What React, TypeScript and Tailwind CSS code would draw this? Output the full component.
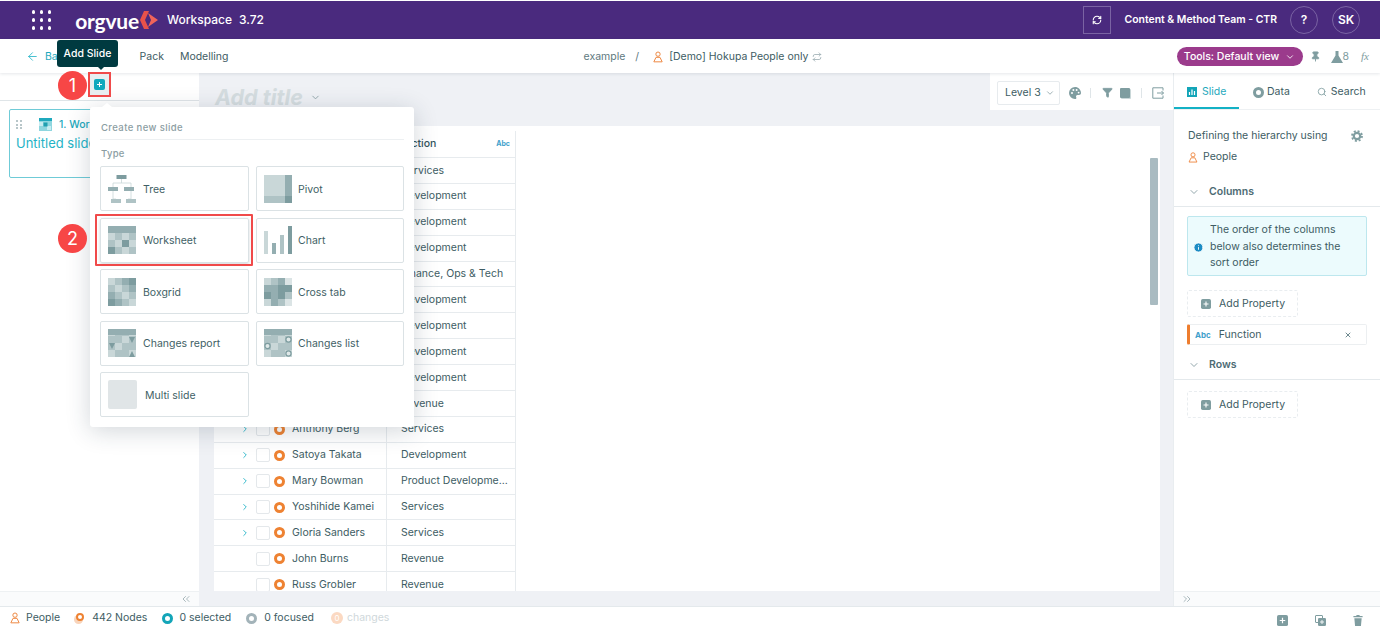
import React from "react";
import { ArrowLeft, ChevronDown, ChevronRight, ChevronsLeft, ChevronsRight, Filter, Info, Pin, RefreshCw, Repeat, Search, X } from "lucide-react";

const Person = ({ className = "" }: { className?: string }) => (
  <svg viewBox="0 0 12 14" className={className} fill="none" stroke="#ee8a45" strokeWidth="1.2">
    <circle cx="6" cy="3.6" r="2.6" />
    <path d="M3.6 7.4h4.8L11 12.8H1z" strokeLinejoin="round" />
  </svg>
);

const Ring = ({ color }: { color: string }) => (
  <span className="block h-[11px] w-[11px] shrink-0 rounded-full border-[3px] bg-white" style={{ borderColor: color }} />
);

const PlusBox = ({ className = "" }: { className?: string }) => (
  <svg viewBox="0 0 12 12" className={className}>
    <rect width="12" height="12" rx="2" fill="#7f9da0" />
    <path d="M6 3v6M3 6h6" stroke="#fff" strokeWidth="1.3" />
  </svg>
);

const c1 = "#c9d7d8", c2 = "#afc3c5", c3 = "#94aeb1", c4 = "#7d9c9f", c0 = "#dbe4e5";

const Grid = ({ cells }: { cells: string[] }) => (
  <svg viewBox="0 0 28 28" className="h-[28px] w-[28px] shrink-0">
    {cells.map((c, i) => (
      <rect key={i} x={(i % 4) * 7} y={Math.floor(i / 4) * 7} width="7" height="7" fill={c} />
    ))}
  </svg>
);

const sheetCells = [c3, c3, c3, c3, c1, c2, c1, c2, c2, c1, c4, c1, c4, c2, c1, c2];

const TypeIcon = ({ name }: { name: string }) => {
  if (name === "Tree")
    return (
      <svg viewBox="0 0 28 28" className="h-[28px] w-[28px] shrink-0">
        <rect x="8.5" y="0" width="10" height="4" fill={c4} />
        <path d="M13.5 4v4M5 12V8h18v4M5 16v8h3M23 16v8h-3" stroke={c1} fill="none" strokeWidth="0.8" />
        <rect x="0" y="12" width="10" height="4" fill={c3} />
        <rect x="16" y="12" width="10" height="4" fill={c3} />
        <rect x="3" y="24" width="10" height="4" fill={c2} />
        <rect x="18" y="24" width="10" height="4" fill={c2} />
      </svg>
    );
  if (name === "Pivot")
    return (
      <svg viewBox="0 0 28 28" className="h-[28px] w-[28px] shrink-0">
        <rect width="21" height="21" fill={c1} />
        <rect x="21" width="7" height="21" fill={c3} />
        <rect y="21" width="21" height="7" fill={c2} />
        <rect x="21" y="21" width="7" height="7" fill={c4} />
      </svg>
    );
  if (name === "Chart")
    return (
      <svg viewBox="0 0 28 28" className="h-[28px] w-[28px] shrink-0">
        <rect x="0" y="5" width="4" height="23" fill={c1} />
        <rect x="8" y="17" width="4" height="11" fill={c3} />
        <rect x="16" y="9" width="4" height="19" fill={c2} />
        <rect x="24" y="0" width="4" height="28" fill={c4} />
      </svg>
    );
  if (name === "Worksheet") return <Grid cells={sheetCells} />;
  if (name === "Boxgrid") return <Grid cells={[c1, c2, c3, c4, c2, c1, c2, c3, c3, c2, c1, c2, c4, c3, c2, c1]} />;
  if (name === "Cross tab") return <Grid cells={[c1, c2, c3, c0, c3, c3, c4, c4, c4, c3, c4, c2, c1, c3, c2, c0]} />;
  if (name === "Changes report")
    return (
      <svg viewBox="0 0 28 28" className="h-[28px] w-[28px] shrink-0">
        {sheetCells.map((c, i) => (
          <rect key={i} x={(i % 4) * 7} y={Math.floor(i / 4) * 7} width="7" height="7" fill={i % 3 === 0 ? c1 : c2} />
        ))}
        <rect width="28" height="6" fill={c3} />
        <path d="M1 14h6l-3 6zM21 8h6l-3 6zM21 28h6l-3-6z" fill={c4} />
      </svg>
    );
  if (name === "Changes list")
    return (
      <svg viewBox="0 0 28 28" className="h-[28px] w-[28px] shrink-0">
        {sheetCells.map((c, i) => (
          <rect key={i} x={(i % 4) * 7} y={Math.floor(i / 4) * 7} width="7" height="7" fill={i % 3 === 0 ? c1 : c2} />
        ))}
        <rect width="28" height="6" fill={c3} />
        <g fill="#dfe8e8" stroke={c4} strokeWidth="1.2">
          <circle cx="3.5" cy="17" r="2.6" />
          <circle cx="24.5" cy="10.5" r="2.6" />
          <circle cx="24.5" cy="24.5" r="2.6" />
        </g>
      </svg>
    );
  return <span className="h-[29px] w-[29px] shrink-0 rounded-[2px] bg-[#e0e5e7]" />;
};

const types = ["Tree", "Pivot", "Worksheet", "Chart", "Boxgrid", "Cross tab", "Changes report", "Changes list", "Multi slide"];

const rows: [string, string, boolean][] = [
  ["Darren Hughes", "Services", true],
  ["Alan Reyes", "Development", true],
  ["Nora Klein", "Development", true],
  ["Ian Foster", "Development", true],
  ["Helen Marsh", "Finance, Ops & Tech", true],
  ["Peter Lang", "Development", true],
  ["Ruth Adams", "Development", true],
  ["Owen Price", "Development", true],
  ["Tara Quinn", "Development", true],
  ["Victor Hale", "Revenue", true],
  ["Anthony Berg", "Services", true],
  ["Satoya Takata", "Development", true],
  ["Mary Bowman", "Product Developme...", true],
  ["Yoshihide Kamei", "Services", true],
  ["Gloria Sanders", "Services", true],
  ["John Burns", "Revenue", false],
  ["Russ Grobler", "Revenue", false],
];

const AddProperty = () => (
  <div className="flex h-[27px] w-[111px] items-center gap-[8px] rounded-[2px] border border-dashed border-[#e9edf0] pl-[13px] text-[10.5px]">
    <PlusBox className="h-[10px] w-[10px]" />
    Add Property
  </div>
);

const Section = ({ label, extra = "" }: { label: string; extra?: string }) => (
  <div className={`flex items-center border-b border-[#e4e9ec] pl-[14px] ${extra}`}>
    <ChevronDown className="h-[12px] w-[12px] text-[#6f8a90]" strokeWidth={1.5} />
    <span className="ml-[9px] text-[10.5px] font-semibold text-[#4d6b73]">{label}</span>
  </div>
);

export default function App() {
  return (
    <div className="relative flex h-screen w-full flex-col overflow-hidden bg-white font-[Inter,sans-serif] text-[10.5px] text-[#3d5c63]">
      {/* Top bar */}
      <header className="mt-px flex h-[38px] shrink-0 items-center bg-[#4a2a7e] text-white">
        <div className="ml-[32px] grid grid-cols-3 gap-[4.5px]">
          {Array.from({ length: 9 }).map((_, i) => (
            <span key={i} className="h-[3.4px] w-[3.4px] rounded-full bg-white" />
          ))}
        </div>
        <span className="ml-[24px] font-[Lato,sans-serif] text-[21px] font-bold leading-none tracking-[-0.2px]">orgvue</span>
        <svg viewBox="0 0 18 18" className="ml-[1px] h-[18px] w-[18px]">
          <path d="M4 0h5L5 9l4 9H4L0 9z" fill="#e8524a" />
          <path d="M8 2l10 7-10 7 3-7z" fill="#f0645a" />
        </svg>
        <span className="ml-[9px] text-[12px] font-medium">Workspace</span>
        <span className="ml-[7px] text-[12px] font-medium">3.72</span>
        <div className="ml-auto flex h-[28px] w-[28px] items-center justify-center border border-[#7a63a3]">
          <RefreshCw className="h-[10px] w-[10px]" strokeWidth={2.6} />
        </div>
        <span className="ml-[14px] text-[10.4px] font-semibold">Content &amp; Method Team - CTR</span>
        <span className="ml-[13px] flex h-[28px] w-[28px] items-center justify-center rounded-full border border-[#7a63a3] text-[12px] font-semibold">?</span>
        <span className="ml-[14px] mr-[20px] flex h-[28px] w-[28px] items-center justify-center rounded-full border border-[#7a63a3] text-[12px] font-semibold">SK</span>
      </header>

      {/* Secondary bar */}
      <div className="z-10 flex h-[34px] shrink-0 items-center bg-white pt-[1px] text-[10.5px] shadow-[0_1px_3px_rgba(40,60,80,0.12)]">
        <ArrowLeft className="ml-[26px] h-[13px] w-[13px] text-[#1fb3c6]" strokeWidth={1.5} />
        <span className="ml-[6px] text-[#1fa9bd]">Back</span>
        <span className="ml-[17px] w-[36px]">Data</span>
        <span className="ml-[17px]">Pack</span>
        <span className="ml-[16px]">Modelling</span>
        <span className="ml-[355px] text-[#5e7980]">example</span>
        <span className="ml-[10px] text-[#5e7980]">/</span>
        <Person className="ml-[14px] h-[12px] w-[10px]" />
        <span className="ml-[6px]">[Demo] Hokupa People only</span>
        <Repeat className="ml-[4px] h-[10px] w-[10px] text-[#9fb0b5]" />
        <span className="ml-auto flex h-[19px] w-[126px] items-center justify-center gap-[6px] rounded-full bg-[#9b3b8c] text-[10.5px] font-medium text-white">
          Tools: Default view
          <ChevronDown className="h-[10px] w-[10px]" />
        </span>
        <Pin className="ml-[7px] h-[11px] w-[11px] fill-[#7f9da0] text-[#7f9da0]" />
        <svg viewBox="0 0 12 12" className="ml-[10px] h-[12px] w-[12px]">
          <path d="M4.5 0h3v4.5L12 12H0l4.5-7.5z" fill="#7f9da0" />
        </svg>
        <span className="text-[#7f9da0]">8</span>
        <span className="ml-[12px] mr-[11px] font-['Liberation_Serif',serif] text-[11px] italic text-[#7f9da0]">fx</span>
      </div>

      {/* Body */}
      <main className="flex min-h-0 flex-1">
        {/* Slide list */}
        <aside className="flex w-[199px] shrink-0 flex-col bg-white">
          <div className="h-[28px] shrink-0 border-b border-[#dfe5e8]" />
          <div className="flex-1 px-[9px] pt-[8px]">
            <div className="h-[69px] w-[190px] rounded-[2px] border border-solid border-[color:#6fcbd7] pl-[6px] pt-[7px]">
              <div className="flex items-center">
                <span className="grid w-[6px] grid-cols-2 gap-[1.5px]">
                  {Array.from({ length: 6 }).map((_, i) => (
                    <span key={i} className="h-[2px] w-[2px] bg-[#b8c6c9]" />
                  ))}
                </span>
                <svg viewBox="0 0 13 13" className="ml-[17px] h-[13px] w-[13px]">
                  <rect width="13" height="13" fill="#8fd6df" />
                  <rect x="0" y="4" width="4" height="4" fill="#c6ecf1" />
                  <rect x="8" y="8" width="4" height="4" fill="#c6ecf1" />
                  <rect x="4.5" y="4.5" width="4" height="4" fill="#1f9fb0" />
                  <rect width="13" height="3" fill="#1fa9bd" />
                </svg>
                <span className="ml-[7px] text-[10.5px] font-medium text-[#1fa9bd]">1. Worksheet</span>
              </div>
              <div className="mt-[1px] text-[13px] text-[#1fb3c6]">Untitled slide</div>
            </div>
          </div>
          <div className="flex h-[15px] shrink-0 items-center justify-end border-t border-[#eef1f3] bg-[#fafbfc] pr-[7px]">
            <ChevronsLeft className="h-[12px] w-[12px] text-[#8fa3a8]" strokeWidth={1.5} />
          </div>
        </aside>

        {/* Centre */}
        <section className="flex min-w-0 flex-1 flex-col bg-[#eff1f5]">
          <div className="flex h-[37px] shrink-0 items-center">
            <span className="ml-[16px] mt-[11px] text-[21.5px] font-bold italic text-[#d5dde0]">Add title</span>
            <ChevronDown className="ml-[7px] mt-[11px] h-[11px] w-[11px] text-[#8fa3a8]" />
            <div className="ml-auto flex h-full w-[183px] items-center bg-white pl-[7px] pt-[2px]">
              <span className="flex h-[24px] w-[63px] items-center rounded-[2px] border border-[#e7ebee] pl-[7px] text-[10.5px]">
                Level 3
                <ChevronDown className="ml-[4px] h-[10px] w-[10px] text-[#8fa3a8]" />
              </span>
              <svg viewBox="0 0 12 12" className="ml-[9px] h-[12px] w-[12px]">
                <path d="M6 0a6 6 0 1 0 0 12c1.4 0 1.6-1 1.2-1.8-.5-1 .1-2.2 1.3-2.2H10c1.2 0 2-.8 2-2 0-3.3-2.7-6-6-6z" fill="#7f9da0" />
                <g fill="#fff">
                  <circle cx="3" cy="6" r="1" />
                  <circle cx="4.4" cy="3" r="1" />
                  <circle cx="7.6" cy="3" r="1" />
                  <circle cx="9.6" cy="5.6" r="0.9" />
                </g>
              </svg>
              <span className="ml-[9px] h-[10px] w-px bg-[#dfe5e8]" />
              <Filter className="ml-[11px] h-[11px] w-[11px] fill-[#7f9da0] text-[#7f9da0]" />
              <span className="ml-[7px] h-[10px] w-[10px] rounded-[1px] bg-[#7f9da0] shadow-[1px_1px_0_#c9d7d8]" />
              <span className="ml-[11px] h-[10px] w-px bg-[#dfe5e8]" />
              <svg viewBox="0 0 12 12" className="ml-[10px] h-[12px] w-[12px]" fill="none" stroke="#7f9da0" strokeWidth="1">
                <path d="M11 3.5V.8H.8v10.4H11V8.5M5 6h6.5M9.5 4l2 2-2 2" />
              </svg>
            </div>
          </div>
          <div className="relative ml-[15px] mr-[13px] mt-[16px] min-h-0 flex-1 overflow-hidden bg-white pt-[5px]">
            <div className="w-[302px]">
              <div className="flex h-[27px] border-b border-[#e7ebee] bg-white">
                <div className="w-[173px] border-r border-[#e7ebee]" />
                <div className="flex w-[129px] items-center border-r border-[#e7ebee] pl-[6px] font-medium text-[#33545c]">
                  <span>Function</span>
                  <span className="ml-auto mr-[5px] text-[7px] font-bold text-[#3f9fcb]">Abc</span>
                </div>
              </div>
              {rows.map(([n, f, ch]) => (
                <div key={n} className="flex h-[25.9px] items-center border-b border-[#e7ebee]">
                  <div className="flex h-full w-[173px] items-center border-r border-[#e7ebee]">
                    <span className="ml-[26px] w-[11px]">
                      {ch && <ChevronRight className="h-[10px] w-[10px] text-[#27b5c8]" strokeWidth={2.2} />}
                    </span>
                    <span className="ml-[5px] h-[14px] w-[14px] rounded-[2px] border border-[#e4e8eb]" />
                    <span className="ml-[4px]">
                      <Ring color="#ee8232" />
                    </span>
                    <span className="ml-[7px] whitespace-nowrap text-[10.5px]">{n}</span>
                  </div>
                  <div className="flex h-full w-[129px] items-center border-r border-[#e7ebee] pl-[14px] whitespace-nowrap">{f}</div>
                </div>
              ))}
            </div>
            <div className="absolute right-[2px] top-[32px] h-[147px] w-[8px] rounded-[1px] bg-[#a9bbc1]" />
          </div>
          <div className="h-[15px] shrink-0" />
        </section>

        {/* Right panel */}
        <aside className="flex w-[207px] shrink-0 flex-col border-l border-[#e9edf0] bg-white">
          <div className="flex h-[37px] shrink-0 items-center border-b border-[#eef1f3]">
            <div className="flex h-full w-[65px] items-center border-b-2 border-[#13b1c5] pl-[13px] pt-[3px] text-[#1fa9bd]">
              <svg viewBox="0 0 10 10" className="mr-[5px] h-[10px] w-[10px]">
                <rect width="10" height="10" fill="#13a5b8" />
                <path d="M2.5 8V5M5 8V2.5M7.5 8V4" stroke="#fff" strokeWidth="1.2" />
              </svg>
              Slide
            </div>
            <div className="flex h-full items-center pt-[2px]">
              <span className="ml-[14px]">
                <Ring color="#7f9da0" />
              </span>
              <span className="ml-[3px]">Data</span>
              <Search className="ml-[27px] h-[10px] w-[10px] text-[#7f9da0]" />
              <span className="ml-[4px]">Search</span>
            </div>
          </div>
          <div className="flex flex-col">
            <div className="flex items-center pl-[14px] pr-[17px] pt-[19px] leading-[14px]">
              Defining the hierarchy using
              <svg viewBox="0 0 12 12" className="ml-auto h-[12px] w-[12px]" fill="none" stroke="#7f9da0">
                <circle cx="6" cy="6" r="3.2" strokeWidth="2.2" />
                <circle cx="6" cy="6" r="5" strokeWidth="1.8" strokeDasharray="2 1.93" />
              </svg>
            </div>
            <div className="mt-[7px] flex items-center pl-[14px] leading-[14px]">
              <Person className="h-[11px] w-[10px]" />
              <span className="ml-[5px]">People</span>
            </div>
            <Section label="Columns" extra="mt-[14px] h-[29px]" />
            <div className="mx-[13px] mt-[9px] flex h-[60px] items-center rounded-[2px] border border-[#bde7ee] bg-[#ecfbfd] pl-[5px] pt-[2px] leading-[16.5px]">
              <Info className="h-[11px] w-[11px] shrink-0 fill-[#1c8cc4] text-white" />
              <span className="ml-[6px] w-[140px]">The order of the columns below also determines the sort order</span>
            </div>
            <div className="ml-[13px] mt-[14px]">
              <AddProperty />
            </div>
            <div className="mx-[13px] mt-[7px] flex h-[21px] items-center rounded-[2px] border border-[#eceff1] border-l-[3px] border-l-[#ee7d2e]">
              <span className="ml-[5px] text-[8px] font-bold text-[#3f9fcb]">Abc</span>
              <span className="ml-[8px]">Function</span>
              <X className="ml-auto mr-[14px] h-[8px] w-[8px] text-[#6f8a90]" strokeWidth={3} />
            </div>
            <Section label="Rows" extra="mt-[6px] h-[29px]" />
            <div className="ml-[13px] mt-[11px]">
              <AddProperty />
            </div>
          </div>
          <div className="mt-auto flex h-[15px] shrink-0 items-center border-t border-[#eef1f3] bg-[#fafbfc] pl-[7px]">
            <ChevronsRight className="h-[12px] w-[12px] text-[#8fa3a8]" strokeWidth={1.5} />
          </div>
        </aside>
      </main>

      {/* Status bar */}
      <footer className="flex h-[25px] shrink-0 items-center border-t border-[#e4e9ec] bg-white pb-[2px] text-[10.5px]">
        <Person className="ml-[10px] h-[12px] w-[10px]" />
        <span className="ml-[6px]">People</span>
        <span className="relative ml-[15px] h-[11px] w-[11px]">
          <span className="absolute -left-[1px] top-[2px] h-[9px] w-[9px] rounded-full bg-[#f8d4bb]" />
          <span className="absolute left-[1px] top-0 h-[8px] w-[8px] rounded-full border-[2px] border-[#ee8232] bg-white" />
        </span>
        <span className="ml-[6px]">442 Nodes</span>
        <span className="ml-[15px]">
          <Ring color="#13a5b8" />
        </span>
        <span className="ml-[6px]">0 selected</span>
        <span className="ml-[15px]">
          <Ring color="#a3b3b9" />
        </span>
        <span className="ml-[7px]">0 focused</span>
        <span className="ml-[17px] flex h-[12px] w-[12px] items-center justify-center rounded-full bg-[#fbd9c2] text-[8px] text-white">0</span>
        <span className="ml-[4px] text-[#cfd8db]">changes</span>
        <PlusBox className="ml-auto h-[11px] w-[11px] translate-y-[2px]" />
        <span className="relative ml-[27px] h-[11px] w-[11px] translate-y-[2px]">
          <span className="absolute left-0 top-0 h-[8px] w-[8px] rounded-[1px] border border-[#7f9da0]" />
          <PlusBox className="absolute bottom-0 right-0 h-[8px] w-[8px]" />
        </span>
        <svg viewBox="0 0 10 12" className="ml-[27px] mr-[17px] h-[11px] w-[10px] translate-y-[2px]">
          <path d="M3.5 0h3l.5 1.2H10v1.3H0V1.2h3zM1 3.5h8L8.2 12H1.8z" fill="#7f9da0" />
        </svg>
      </footer>

      {/* Tooltip */}
      <div className="absolute left-[57px] top-[40px] z-30 flex h-[27px] w-[61px] items-center justify-center rounded-[3px] bg-[#003a40] text-[10.5px] font-medium text-white">
        Add Slide
        <span className="absolute left-[40px] top-[26px] h-0 w-0 border-x-[4px] border-t-[4px] border-x-transparent border-t-[#003a40]" />
      </div>

      {/* Add button with annotation */}
      <div className="absolute left-[88px] top-[72px] z-30 flex h-[25px] w-[23px] items-center justify-center border-[2px] border-[#f04a4a] bg-[#e8eef0]">
        <svg viewBox="0 0 11 11" className="h-[11px] w-[11px]">
          <rect width="11" height="11" rx="2" fill="#0fa8bd" />
          <path d="M5.5 3v5M3 5.5h5" stroke="#fff" strokeWidth="1" />
        </svg>
      </div>
      <span className="absolute left-[58px] top-[71px] z-40 flex h-[29px] w-[29px] items-center justify-center rounded-full bg-[#f74646] text-[18px] text-white">1</span>

      {/* Create slide popup */}
      <div className="absolute left-[90px] top-[107px] z-20 h-[320px] w-[324px] rounded-[3px] bg-white px-[10px] shadow-[0_4px_24px_rgba(30,50,70,0.2)]">
        <span className="absolute left-[12px] top-[-4px] h-0 w-0 border-x-[5px] border-b-[4px] border-x-transparent border-b-white" />
        <div className="flex h-[33px] items-end border-b border-[#edf0f2] pb-[4px] pl-px text-[9.5px] font-medium tracking-[0.4px] text-[#8b9da2]">Create new slide</div>
        <div className="flex h-[26px] items-center pl-px pt-[3px] text-[9.5px] font-medium tracking-[0.3px] text-[#8b9da2]">Type</div>
        <div className="grid grid-cols-[149px_148px] gap-x-[7px] gap-y-[6.5px]">
          {types.map((t, i) => (
            <div key={t} className={`relative flex h-[45px] items-center rounded-[2px] border border-[#dbe2e5] pl-[7px] ${t === "Worksheet" ? "shadow-[0_1px_3px_rgba(30,50,70,0.2)]" : ""}`}>
              <TypeIcon name={t} />
              <span className={`translate-y-[1px] text-[10.5px] text-[#3f5f66] ${t === "Multi slide" ? "ml-[8px]" : i % 2 === 1 ? "ml-[6px]" : "ml-[7px]"}`}>{t}</span>
              {t === "Worksheet" && <span className="absolute -bottom-[4px] -left-[6px] -right-[5px] -top-[5px] rounded-[1px] border-[2px] border-[#f04a4a]" />}
            </div>
          ))}
        </div>
      </div>
      <span className="absolute left-[58px] top-[224px] z-40 flex h-[29px] w-[29px] items-center justify-center rounded-full bg-[#f74646] text-[18px] text-white">2</span>
    </div>
  );
}
